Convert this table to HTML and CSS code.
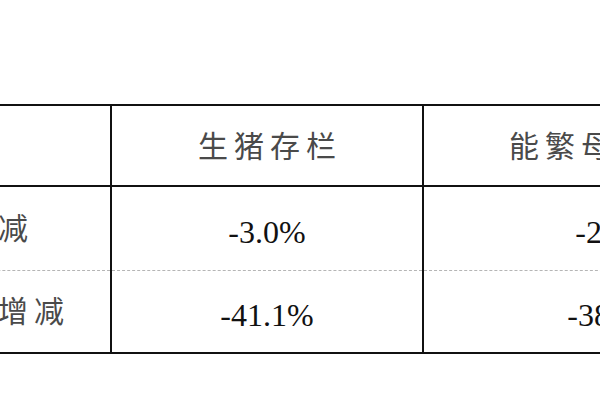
FILE: index.html
```html
<!DOCTYPE html>
<html lang="zh-CN">
<head>
<meta charset="utf-8">
<link rel="stylesheet" href="styles.css">
</head>
<body>
<div class="page">
  <table class="data">
    <colgroup>
      <col class="c1"><col class="c2"><col class="c3">
    </colgroup>
    <thead>
      <tr class="head">
        <th class="label"></th>
        <th class="cn">生猪存栏</th>
        <th class="cn">能繁母猪存栏</th>
      </tr>
    </thead>
    <tbody>
      <tr class="r1">
        <td class="label cn">环比增减</td>
        <td class="num">-3.0%</td>
        <td class="num">-2.3%</td>
      </tr>
      <tr class="r2">
        <td class="label cn">同比去年增减</td>
        <td class="num">-41.1%</td>
        <td class="num">-38.9%</td>
      </tr>
    </tbody>
  </table>
</div>
</body>
</html>
```

FILE: styles.css
```css
html, body {
  margin: 0;
  padding: 0;
  background: #ffffff;
}
.page {
  width: 600px;
  height: 400px;
  overflow: hidden;
  padding-top: 104px;
  box-sizing: border-box;
}
.data {
  border-collapse: collapse;
  table-layout: fixed;
  width: 998px;
  margin-left: -194px;
}
.c1 { width: 304px; }
.c2 { width: 312px; }
.c3 { width: 382px; }
.data th, .data td {
  padding: 0;
  line-height: 1.2;
  text-align: center;
  vertical-align: middle;
  border-left: 2px solid #111;
  border-right: 2px solid #111;
}
.data .head th {
  height: 75px;
  padding-bottom: 4px;
  border-top: 2px solid #111;
  border-bottom: 2px solid #111;
}
.data .r1 td {
  height: 75px;
  border-bottom: 1px dashed #b5b5b5;
}
.data .r2 td {
  height: 73px;
  border-bottom: 2px solid #111;
}
.cn {
  font-family: "Noto Sans CJK SC", sans-serif;
  font-weight: 400;
  font-size: 30px;
  letter-spacing: 6px;
  color: #4a4a4a;
}
.data .cn {
  padding-left: 6px;
}
.data td.label.cn {
  padding-bottom: 6px;
}
.num {
  font-family: "Liberation Serif", serif;
  font-size: 32px;
  color: #111;
}
.data td.num {
  padding-top: 8px;
}
```
